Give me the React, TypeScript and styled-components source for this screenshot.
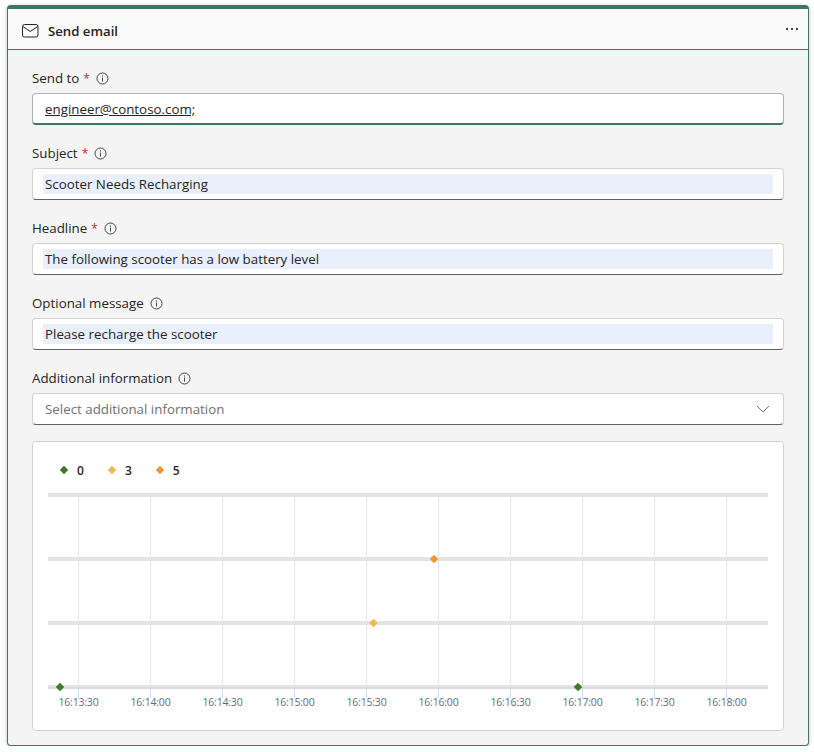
import * as React from 'react';
import styled, { createGlobalStyle } from 'styled-components';

const GlobalStyle = createGlobalStyle`
  html, body {
    margin: 0;
    padding: 0;
    background: #ffffff;
    font-family: "Open Sans", "Noto Sans", "Liberation Sans", sans-serif;
  }
`;

const Card = styled.div`
  box-sizing: border-box;
  width: 802px;
  height: 741px;
  margin: 5px 0 0 7px;
  display: flex;
  flex-direction: column;
  background: #f4f4f4;
  border: 1px solid #3f7564;
  border-top-width: 4px;
  border-radius: 4px;
  box-shadow: 0 1px 4px rgba(0, 0, 0, 0.25);
`;

const Header = styled.div`
  box-sizing: border-box;
  height: 41px;
  flex: none;
  display: flex;
  align-items: center;
  padding: 4px 9px 0 14px;
  background: #fafafa;
  border-bottom: 1px solid #3f7564;
`;

const Title = styled.span`
  margin-left: 9px;
  font-size: 13.2px;
  font-weight: 600;
  color: #242424;
`;

const MoreButton = styled.div`
  margin-left: auto;
  margin-bottom: 4px;
  display: flex;
  align-items: center;
`;

const Body = styled.div`
  display: flex;
  flex-direction: column;
  padding: 18px 24px 0 24px;
`;

const Field = styled.div`
  display: flex;
  flex-direction: column;
  margin-bottom: 18px;
`;

const LabelRow = styled.div`
  height: 20px;
  display: flex;
  align-items: center;
  margin-bottom: 5px;
  font-size: 13.33px;
  color: #242424;
`;

const Star = styled.span`
  margin-left: 4px;
  font-size: 12px;
  color: #bc2f32;
`;

const InfoWrap = styled.span`
  display: inline-flex;
  margin-left: 6px;
`;

const Input = styled.div<{ $focused?: boolean }>`
  box-sizing: border-box;
  height: 32px;
  display: flex;
  align-items: center;
  padding: 0 10px;
  background: #ffffff;
  border: 1px solid ${(p) => (p.$focused ? '#b0b0b0' : '#d1d1d1')};
  border-bottom: ${(p) => (p.$focused ? '2px solid #3f7564' : '1px solid #616161')};
  border-radius: 4px;
  font-size: 13.33px;
  color: #242424;
`;

const Recipient = styled.span`
  margin-left: 2px;
  text-decoration: underline;
`;

const Filled = styled.span`
  flex: 1;
  height: 20px;
  line-height: 20px;
  padding-left: 2px;
  background: #e9effb;
  white-space: nowrap;
`;

const Placeholder = styled.span`
  margin-left: 2px;
  color: #707070;
`;

const Chevron = styled.span`
  margin-left: auto;
  margin-right: 3px;
  display: inline-flex;
`;

const ChartPanel = styled.div`
  box-sizing: border-box;
  height: 290px;
  margin-top: -2px;
  display: flex;
  flex-direction: column;
  padding: 19px 15px 0 15px;
  background: #ffffff;
  border: 1px solid #d1d1d1;
  border-radius: 4px;
`;

const Legend = styled.div`
  height: 18px;
  display: flex;
  align-items: center;
  gap: 24px;
  padding-left: 12px;
  margin-bottom: 11px;
`;

const LegendItem = styled.div`
  display: flex;
  align-items: center;
  gap: 10px;
  font-size: 12px;
  font-weight: 600;
  color: #242424;
`;

const Diamond = styled.span<{ $color: string }>`
  width: 6px;
  height: 6px;
  margin-left: 1px;
  transform: rotate(45deg);
  background: ${(p) => p.$color};
`;

const InfoIcon = () => (
  <svg width="13" height="13" viewBox="0 0 13 13" fill="none">
    <circle cx="6.5" cy="6.5" r="5.5" stroke="#424242" />
    <rect x="6" y="5.6" width="1" height="3.9" fill="#424242" />
    <rect x="6" y="3.4" width="1" height="1.2" fill="#424242" />
  </svg>
);

const MailIcon = () => (
  <svg width="17" height="14" viewBox="0 0 17 14" fill="none" stroke="#242424">
    <rect x="0.5" y="0.5" width="15.5" height="12.5" rx="2" />
    <path d="M0.8 2.5 L8.25 7.5 L15.7 2.5" />
  </svg>
);

const MoreIcon = () => (
  <svg width="14" height="4" viewBox="0 0 14 4" fill="#424242">
    <rect x="1" y="1" width="2" height="2" />
    <rect x="6" y="1" width="2" height="2" />
    <rect x="11" y="1" width="2" height="2" />
  </svg>
);

const ChevronIcon = () => (
  <svg width="14" height="8" viewBox="0 0 14 8" fill="none" stroke="#757575">
    <path d="M1 1 L7 7 L13 1" />
  </svg>
);

const ticks = [
  '16:13:30',
  '16:14:00',
  '16:14:30',
  '16:15:00',
  '16:15:30',
  '16:16:00',
  '16:16:30',
  '16:17:00',
  '16:17:30',
  '16:18:00',
];

const rows = [5, 69, 133, 197];

const points = [
  { x: 12, y: 197, color: '#3f7a2a' },
  { x: 325.5, y: 133, color: '#f2b84b' },
  { x: 386, y: 69, color: '#ee9535' },
  { x: 530, y: 197, color: '#3f7a2a' },
];

const Plot = () => (
  <svg width="720" height="225" viewBox="0 0 720 225" style={{ display: 'block' }}>
    {ticks.map((t, i) => (
      <line key={t} x1={30.5 + i * 72} x2={30.5 + i * 72} y1={7} y2={195} stroke="#e3e3e3" />
    ))}
    {ticks.map((t, i) => (
      <line key={t} x1={30.5 + i * 72} x2={30.5 + i * 72} y1={198} y2={208} stroke="#d5dbea" />
    ))}
    {rows.map((y) => (
      <rect key={y} x={0} y={y - 2} width={720} height={4} fill="#e4e4e4" />
    ))}
    <rect x={0} y={197} width={720} height={2} fill="#d5dbea" />
    {ticks.map((t, i) => (
      <text
        key={t}
        x={30.5 + i * 72}
        y={216}
        textAnchor="middle"
        fontSize="10.5"
        letterSpacing="-0.2"
        fill="#666a73"
        fontFamily='"Open Sans", sans-serif'
      >
        {t}
      </text>
    ))}
    {points.map((p) => (
      <rect
        key={p.x}
        x={p.x - 3}
        y={p.y - 3}
        width={6}
        height={6}
        fill={p.color}
        transform={`rotate(45 ${p.x} ${p.y})`}
      />
    ))}
  </svg>
);

const FormField: React.FC<{ label: string; required?: boolean; children: React.ReactNode }> = ({
  label,
  required,
  children,
}) => (
  <Field>
    <LabelRow>
      {label}
      {required && <Star>*</Star>}
      <InfoWrap>
        <InfoIcon />
      </InfoWrap>
    </LabelRow>
    {children}
  </Field>
);

export default function App() {
  return (
    <>
      <GlobalStyle />
      <Card>
        <Header>
          <MailIcon />
          <Title>Send email</Title>
          <MoreButton>
            <MoreIcon />
          </MoreButton>
        </Header>
        <Body>
          <FormField label="Send to" required>
            <Input $focused>
              <Recipient>engineer@contoso.com;</Recipient>
            </Input>
          </FormField>
          <FormField label="Subject" required>
            <Input>
              <Filled>Scooter Needs Recharging</Filled>
            </Input>
          </FormField>
          <FormField label="Headline" required>
            <Input>
              <Filled>The following scooter has a low battery level</Filled>
            </Input>
          </FormField>
          <FormField label="Optional message">
            <Input>
              <Filled>Please recharge the scooter</Filled>
            </Input>
          </FormField>
          <FormField label="Additional information">
            <Input>
              <Placeholder>Select additional information</Placeholder>
              <Chevron>
                <ChevronIcon />
              </Chevron>
            </Input>
          </FormField>
          <ChartPanel>
            <Legend>
              <LegendItem>
                <Diamond $color="#3f7a2a" />0
              </LegendItem>
              <LegendItem>
                <Diamond $color="#f2b84b" />3
              </LegendItem>
              <LegendItem>
                <Diamond $color="#ee9535" />5
              </LegendItem>
            </Legend>
            <Plot />
          </ChartPanel>
        </Body>
      </Card>
    </>
  );
}
